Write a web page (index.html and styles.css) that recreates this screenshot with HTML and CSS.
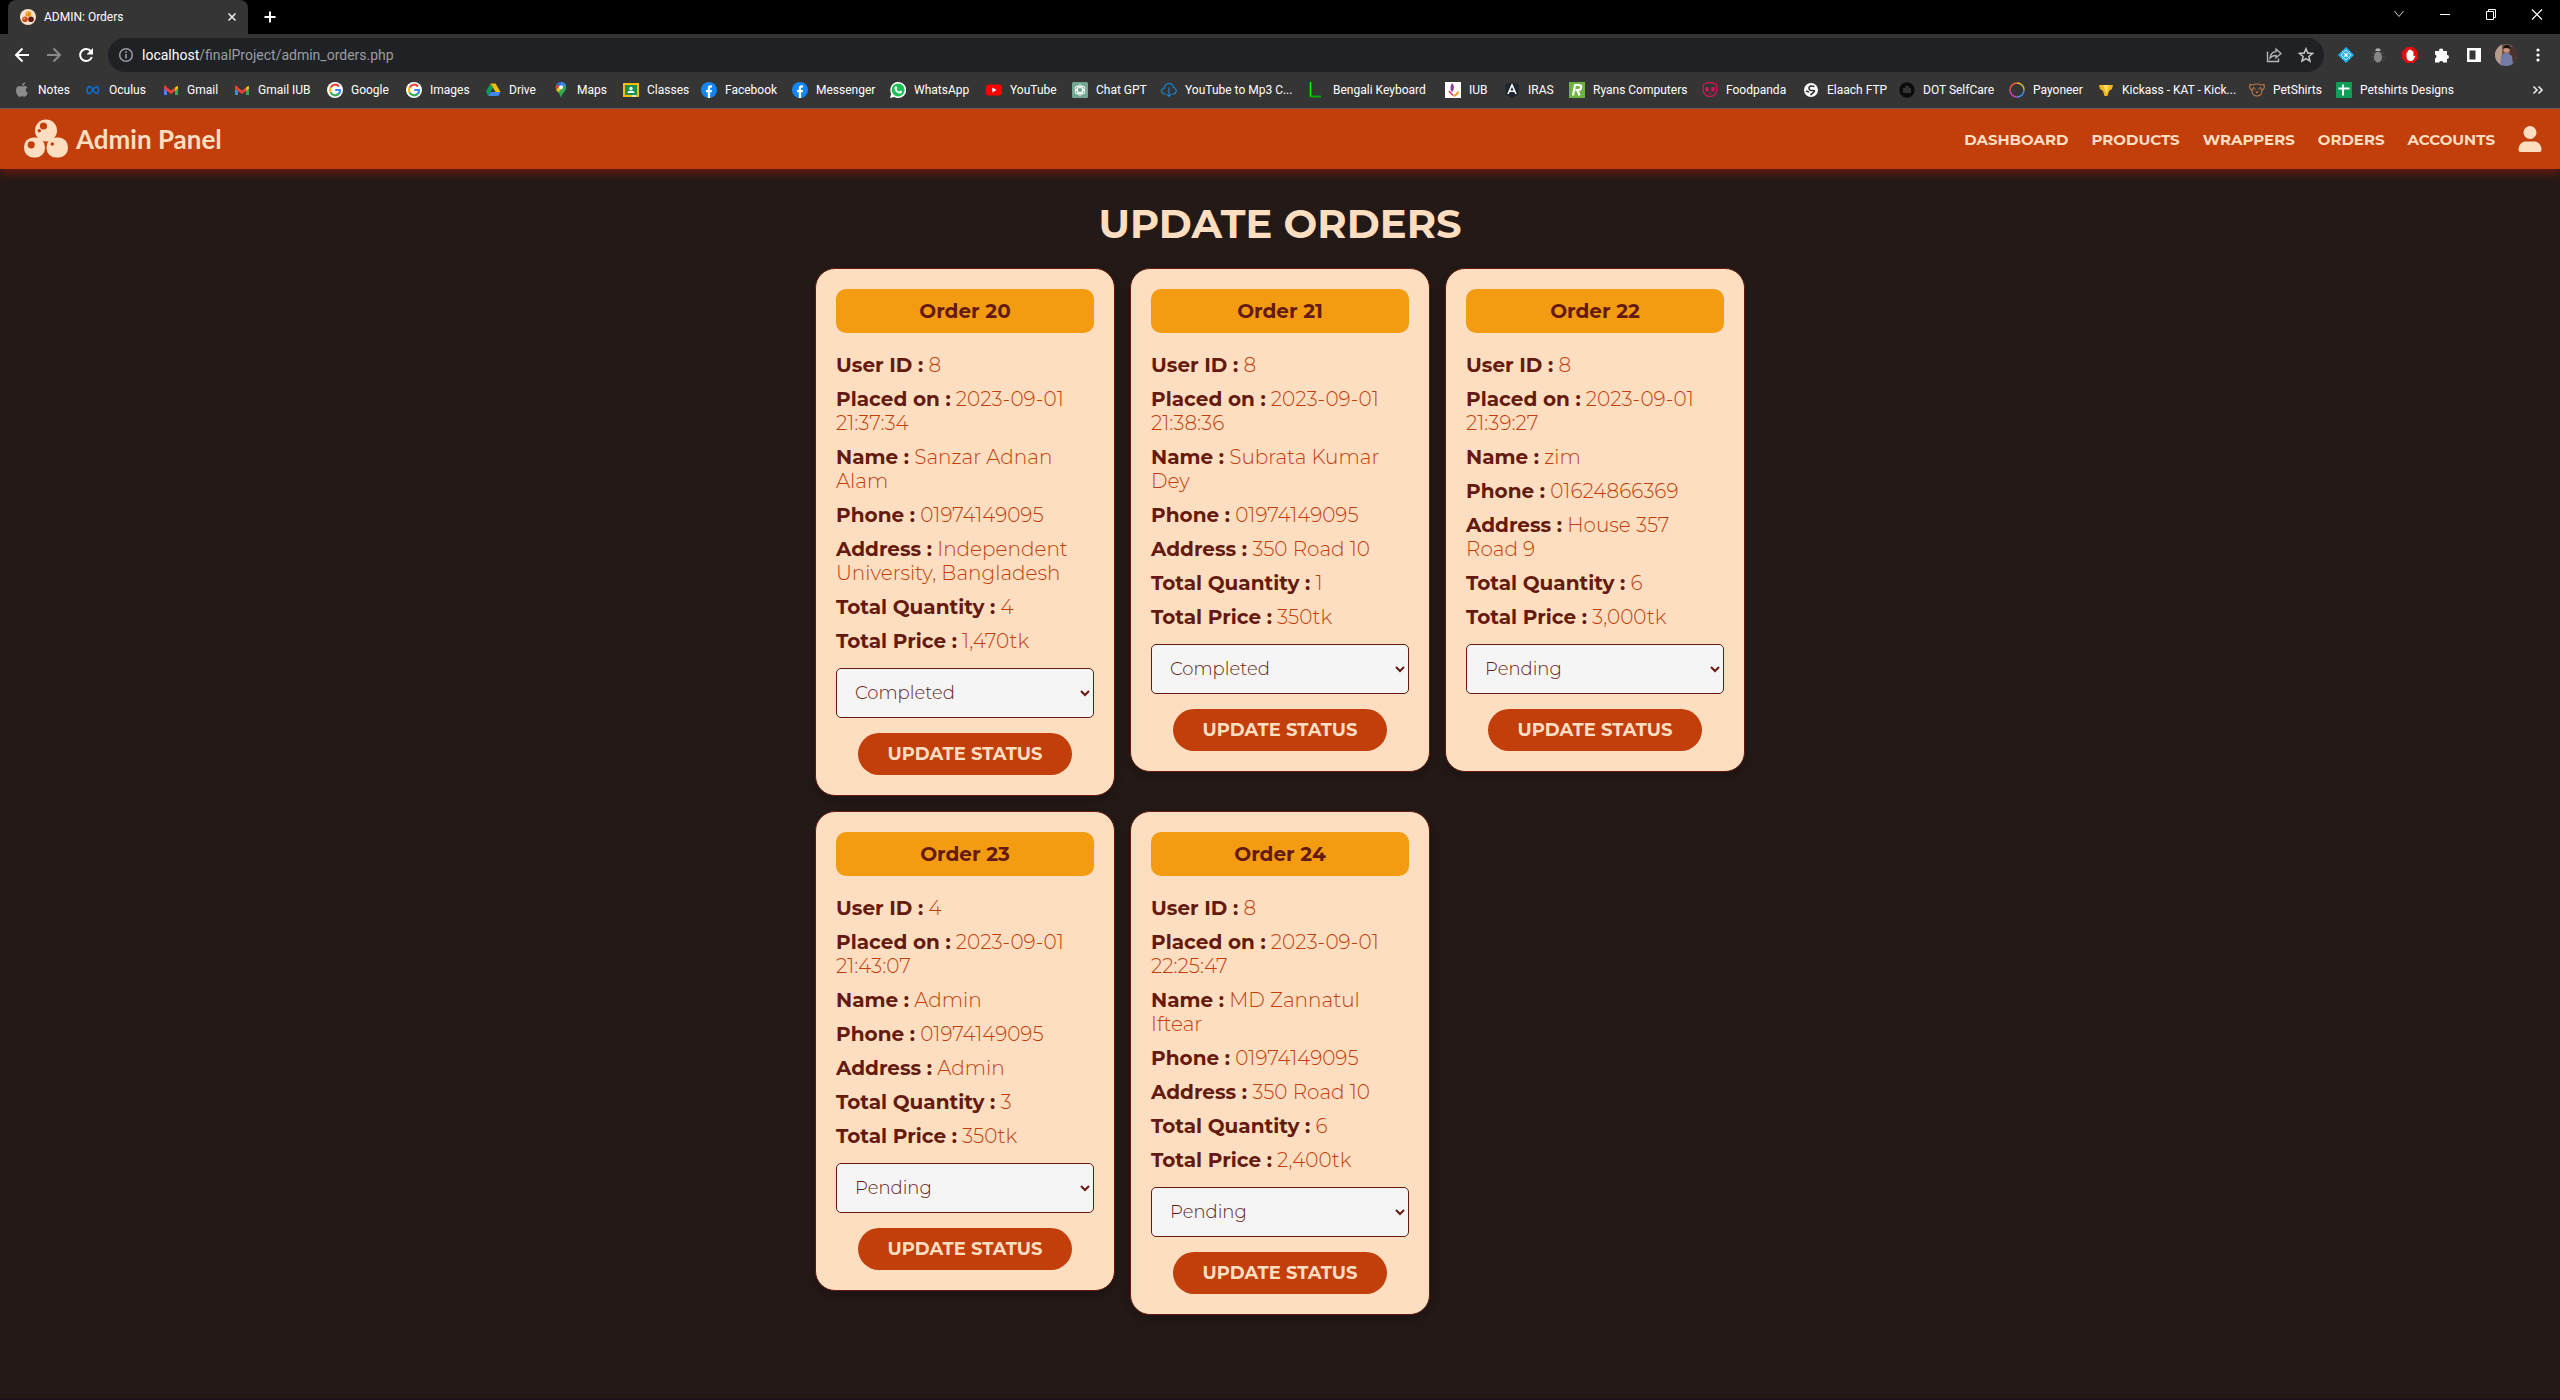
FILE: index.html
```html
<!DOCTYPE html>
<html lang="en">
<head>
<meta charset="utf-8">
<title>ADMIN: Orders</title>
<link rel="stylesheet" href="styles.css">
</head>
<body>
<svg class="defs" aria-hidden="true">
  <symbol id="i-gmail" viewBox="0 0 16 16"><path d="M1 4v9h3V7z" fill="#4285f4"/><path d="M12 7v6h3V4z" fill="#34a853"/><path d="M1 3.500l3 2.300v3.200L1 6.500z" fill="#c5221f"/><path d="M4 5.500l4 3 4-3v3.500l-4 3-4-3z" fill="#ea4335"/><path d="M12 5.500l1.500-1.300q1.500-.8 1.500 1V6.500L12 9z" fill="#fbbc04"/><path d="M1 5q0-2 1.700-1.300L4 5v4L1 6.500z" fill="#ea4335"/></symbol>
  <symbol id="i-google" viewBox="0 0 16 16"><circle cx="8" cy="8" r="8" fill="#fff"/><g fill="none" stroke-width="2.200"><path d="M12 4.500A5 5 0 0 0 3.600 5.600" stroke="#ea4335"/><path d="M3.600 5.600a5 5 0 0 0 0 4.800" stroke="#fbbc04"/><path d="M3.600 10.400a5 5 0 0 0 8 1.500" stroke="#34a853"/><path d="M11.600 11.900A5 5 0 0 0 13 8H8.200" stroke="#4285f4"/></g></symbol>
  <symbol id="i-facebook" viewBox="0 0 16 16"><circle cx="8" cy="8" r="8" fill="#1286f3"/><path d="M6.800 16V10.300H5V8h1.800V6.300c0-2 1.100-3 2.800-3l1.500.1v2h-1c-.8 0-1 .5-1 1.100V8h2l-.4 2.300H9.100V16z" fill="#fff"/></symbol>
</svg>

<div class="browser">
  <div class="tabstrip">
    <div class="tab">
      <svg class="ico" viewBox="0 0 16 16"><circle cx="8" cy="8" r="8" fill="#fbe3cb"/><circle cx="8.300" cy="5" r="2.800" fill="#f0900f"/><circle cx="5" cy="10.200" r="2.800" fill="#d44a12"/><circle cx="11" cy="10.200" r="2.800" fill="#641a0e"/><circle cx="7.300" cy="4" r=".8" fill="#fbe3cb"/><circle cx="4.200" cy="9.400" r=".7" fill="#fbe3cb"/></svg>
      <span class="tab-title">ADMIN: Orders</span>
      <button class="plain" aria-label="Close tab"><svg class="ico" viewBox="0 0 16 16"><path d="M4.500 4.500l7 7M11.500 4.500l-7 7" stroke="#e8e8e8" stroke-width="1.600"/></svg></button>
    </div>
    <button class="plain newtab" aria-label="New tab"><svg class="ico" viewBox="0 0 16 16"><path d="M8 2.500v11M2.500 8h11" stroke="#fff" stroke-width="2"/></svg></button>
    <div class="window-buttons">
      <button class="plain" aria-label="Search tabs"><svg class="ico" viewBox="0 0 16 16"><path d="M3.500 5L8 10.500 12.500 5" fill="none" stroke="#ccc"/></svg></button>
      <button class="plain" aria-label="Minimize"><svg class="ico" viewBox="0 0 16 16"><path d="M3 8.500h10" stroke="#fff"/></svg></button>
      <button class="plain" aria-label="Restore"><svg class="ico" viewBox="0 0 16 16"><path d="M3.500 5.500h7v8h-7zM5.500 5.500v-2h7v8h-2" fill="none" stroke="#fff"/></svg></button>
      <button class="plain" aria-label="Close"><svg class="ico" viewBox="0 0 16 16"><path d="M3 3.500l10 10M13 3.500l-10 10" stroke="#fff" stroke-width="1.200"/></svg></button>
    </div>
  </div>

  <div class="toolbar">
    <div class="tools">
      <button class="plain" aria-label="Back"><svg class="ico" viewBox="0 0 16 16"><path d="M15 8H2M8.500 1.500L2 8l6.500 6.500" fill="none" stroke="#fff" stroke-width="2"/></svg></button>
      <button class="plain" aria-label="Forward"><svg class="ico" viewBox="0 0 16 16"><path d="M1 8h13M7.500 1.500L14 8l-6.500 6.500" fill="none" stroke="#8a8a8a" stroke-width="2"/></svg></button>
      <button class="plain" aria-label="Reload"><svg class="ico" viewBox="0 0 16 16"><path d="M13 4.500A6 6 0 1 0 13.800 10" fill="none" stroke="#fff" stroke-width="2"/><path d="M15 1v6.500H8.500z" fill="#fff"/></svg></button>
    </div>
    <div class="omnibox">
      <svg class="ico" viewBox="0 0 16 16"><circle cx="8" cy="8" r="6.300" fill="none" stroke="#9a9da1" stroke-width="1.500"/><path d="M8 7v4.500M8 4.300v1.600" stroke="#9a9da1" stroke-width="1.600"/></svg>
      <p class="url"><span class="host">localhost</span>/finalProject/admin_orders.php</p>
      <button class="plain" aria-label="Share"><svg class="ico" viewBox="0 0 16 16"><path d="M1.500 4.500v10h11v-3" fill="none" stroke="#b5b7ba" stroke-width="1.400"/><path d="M10 2l5 4.500-5 4.300V8.500c-3 0-4.500.6-6 2.500.4-3.500 2.500-6 6-6.300z" fill="none" stroke="#b5b7ba" stroke-width="1.300"/></svg></button>
      <button class="plain" aria-label="Bookmark"><svg class="ico" viewBox="0 0 16 16"><path d="M8 1.800l1.800 4.300 4.700.4-3.600 3 1.100 4.600L8 11.700 4 14.100l1.100-4.600-3.600-3 4.700-.4z" fill="none" stroke="#c5c7ca" stroke-width="1.500"/></svg></button>
    </div>
    <div class="tools">
      <svg class="ico" viewBox="0 0 16 16"><path d="M8 0l8 8-8 8-8-8z" fill="#1fb2f7"/><path d="M8 3l5 5-5 5-5-5zM4 4l8 8M12 4l-8 8" fill="none" stroke="#b8ecff"/><path d="M8 6l2 2-2 2-2-2z" fill="#fff"/></svg>
      <svg class="ico" viewBox="0 0 16 16"><path d="M2 5l3 2M14 5l-3 2M1 10h14M2.500 14L5 12M13.500 14L11 12" stroke="#505050"/><ellipse cx="8" cy="10" rx="4" ry="5.500" fill="#858585"/><path d="M5.300 4a2.700 2.700 0 0 1 5.400 0z" fill="#b0b0b0"/></svg>
      <svg class="ico" viewBox="0 0 16 16"><path d="M4.700 0h6.600L16 4.700v6.600L11.300 16H4.700L0 11.300V4.700z" fill="#e30f0f"/><path d="M4.500 5.500h1.300V3.200h1.400V2.500h1.400v.8H10v1h1.400V9.500l1-.8 1 .6-2 3.500Q10.500 14 8.500 14 5 14 4.500 10z" fill="#fff"/></svg>
      <svg class="ico" viewBox="0 0 16 16"><path d="M1 4h4.200a2 2 0 1 1 3.900 0H13v4a2 2 0 1 1 0 4v3.500H9.200a2.100 2.100 0 0 0-4 0H1v-4a2.100 2.100 0 0 0 0-4z" fill="#fff"/></svg>
      <svg class="ico" viewBox="0 0 16 16"><path d="M1 1h14v14H1zM3.500 3.500v9h6v-9z" fill="#fff" fill-rule="evenodd"/></svg>
      <svg class="avatar" viewBox="0 0 22 22"><clipPath id="round"><circle cx="11" cy="11" r="11"/></clipPath><g clip-path="url(#round)"><path d="M0 0h22v22H0z" fill="#74564a"/><path d="M0 0h7v22H0z" fill="#b59c8c"/><path d="M15 3h7v15h-7z" fill="#4b3430"/><path d="M5 22l1-10 4-3h3l4 3 1 10z" fill="#747ba8"/><circle cx="11.500" cy="5.800" r="3" fill="#c99377"/><path d="M8 5q0-4 4-4t3 4q-4-2-7 0z" fill="#1b1414"/></g></svg>
      <button class="plain" aria-label="Menu"><svg class="ico" viewBox="0 0 16 16"><circle cx="8" cy="3" r="1.600" fill="#fff"/><circle cx="8" cy="8" r="1.600" fill="#fff"/><circle cx="8" cy="13" r="1.600" fill="#fff"/></svg></button>
    </div>
  </div>

  <nav class="bookmarks" aria-label="Bookmarks">
    <a href="#"><svg class="ico" viewBox="0 0 16 16"><path d="M8.300 4.500c1-.6 3.800-1 5 .9-2.200 1.500-1.800 4.300.5 5.200-.8 2.300-2 4.200-3.300 4.200-.9 0-1.300-.5-2.400-.5s-1.500.5-2.300.5C4 14.800 2 11.500 2 8.500c0-3.500 2.600-5 4.500-4.200zM8 3.800C8 2 9.200.6 11 .2 11.200 2 9.800 3.700 8 3.800z" fill="#8c8c8c"/></svg>Notes</a>
    <a href="#"><svg class="ico" viewBox="0 0 16 16"><path d="M4 11.500c-3 0-2.200-7 .8-7C7 4.500 9 11.500 11.500 11.500c3 0 2.500-7 0-7C8.800 4.500 7 11.500 4 11.500z" fill="none" stroke="#0b6fd6" stroke-width="1.600"/></svg>Oculus</a>
    <a href="#"><svg class="ico"><use href="#i-gmail"/></svg>Gmail</a>
    <a href="#"><svg class="ico"><use href="#i-gmail"/></svg>Gmail IUB</a>
    <a href="#"><svg class="ico"><use href="#i-google"/></svg>Google</a>
    <a href="#"><svg class="ico"><use href="#i-google"/></svg>Images</a>
    <a href="#"><svg class="ico" viewBox="0 0 16 16"><path d="M5.500 1.500L1 9.500 3.300 14 8 5.800z" fill="#0f9d58"/><path d="M5.500 1.500h5L15.500 10h-5z" fill="#fbbc04"/><path d="M5.700 10h9.800l-2.200 4H3.300z" fill="#4285f4"/></svg>Drive</a>
    <a href="#"><svg class="ico" viewBox="0 0 16 16"><path d="M8 0a5.300 5.300 0 0 0-5.200 6C3.200 9.500 7 11 8 16c1-5 4.800-6.500 5.200-10A5.300 5.300 0 0 0 8 0z" fill="#34a853"/><path d="M8 0a5.300 5.300 0 0 1 4.600 2.700L8 8z" fill="#4285f4"/><path d="M8 0a5.300 5.300 0 0 0-4.300 2.200L8 6z" fill="#1a73e8"/><path d="M3.700 2.200a5.500 5.500 0 0 0-.5 5.300L6.500 4.500z" fill="#ea4335"/><path d="M3.200 7.500q.8 1.600 2 2.700L9 6.500 6.800 4.800z" fill="#fbbc04"/><circle cx="8" cy="5.300" r="2" fill="#fff"/></svg>Maps</a>
    <a href="#"><svg class="ico" viewBox="0 0 16 16"><path d="M0 1h16v14H0z" fill="#fbbc04"/><path d="M2 3h12v10H2z" fill="#1e8e4e"/><circle cx="8" cy="6.500" r="1.700" fill="#fff"/><path d="M4.500 11q0-2.300 3.500-2.300t3.500 2.300z" fill="#fff"/><path d="M9 13h4v2H9z" fill="#ddd"/></svg>Classes</a>
    <a href="#"><svg class="ico"><use href="#i-facebook"/></svg>Facebook</a>
    <a href="#"><svg class="ico"><use href="#i-facebook"/></svg>Messenger</a>
    <a href="#"><svg class="ico" viewBox="0 0 16 16"><path d="M0 16l1.200-4.200A8 8 0 1 1 4.200 14.900z" fill="#fff"/><circle cx="8.100" cy="7.900" r="6.500" fill="#19c351"/><path d="M5.500 4.200l1 .1.800 1.900-.8 1.100q.9 1.700 2.700 2.400l1-1.100 1.900.9q.1 2-2.100 2.200Q5 10.900 4.500 6.500q0-1.500 1-2.300z" fill="#fff"/></svg>WhatsApp</a>
    <a href="#"><svg class="ico" viewBox="0 0 16 16"><rect y="2.500" width="16" height="11" rx="2.500" fill="#f00"/><path d="M6.300 5.500v5l4.200-2.500z" fill="#fff"/></svg>YouTube</a>
    <a href="#"><svg class="ico" viewBox="0 0 16 16"><rect width="16" height="16" rx="1.500" fill="#74a892"/><g fill="none" stroke="#f2faf6"><ellipse cx="8" cy="8" rx="2.600" ry="5.300"/><ellipse cx="8" cy="8" rx="2.600" ry="5.300" transform="rotate(60 8 8)"/><ellipse cx="8" cy="8" rx="2.600" ry="5.300" transform="rotate(120 8 8)"/></g></svg>Chat GPT</a>
    <a href="#"><svg class="ico" viewBox="0 0 16 16"><path d="M5 12H3.500a3 3 0 0 1 0-6C4 .5 11.500 0 12.500 5.500a3.300 3.300 0 0 1 0 6.500H11M8 5.500v9M5.800 12.300L8 14.500l2.200-2.200" fill="none" stroke="#1684c9" stroke-width="1.200"/></svg>YouTube to Mp3 C...</a>
    <a href="#"><svg class="ico" viewBox="0 0 16 16"><path d="M1.500 0v14.500" stroke="#0f0" stroke-width="1.500"/><path d="M.8 14.500H12" stroke="#00a800" stroke-width="2"/></svg>Bengali Keyboard</a>
    <a href="#"><svg class="ico" viewBox="0 0 16 16"><path d="M0 0h16v16H0z" fill="#fff"/><path d="M7 1c3 3 2 7 0 9C5 8 5 4 7 1z" fill="#8d3a9b"/><path d="M4 9l4 4.500" stroke="#d32f5b" stroke-width="1.500"/><path d="M8 14l6-5.500-.5 3.500L9.500 15z" fill="#f59a1b"/></svg>IUB</a>
    <a href="#"><svg class="ico" viewBox="0 0 16 16"><path d="M8 0l7 2.500-1 10L8 16l-6-3.500-1-10z" fill="#1d2430"/><path d="M4 12L8 3l4 9M5.500 9.300h5" fill="none" stroke="#fff" stroke-width="1.600"/></svg>IRAS</a>
    <a href="#"><svg class="ico" viewBox="0 0 16 16"><path d="M0 0h16v16H0z" fill="#6cb33f"/><path d="M4 13.500L6 3h3.500q3.200 0 2.600 2.800-.5 2.400-3.100 2.400H6.500M8.500 8.200l2 5.300" fill="none" stroke="#fff" stroke-width="2.200"/></svg>Ryans Computers</a>
    <a href="#"><svg class="ico" viewBox="0 0 16 16"><path d="M3 1.500a2 2 0 0 0-1.500 3.200C0 9.500 3 14.500 8 14.500s8-5 6.500-9.800A2 2 0 0 0 13 1.500Q8-.2 3 1.500z" fill="none" stroke="#d2145a" stroke-width="1.200"/><ellipse cx="5" cy="7.300" rx="1.800" ry="2.400" fill="#d2145a"/><ellipse cx="11" cy="7.300" rx="1.800" ry="2.400" fill="#d2145a"/><path d="M6.500 11h3L8 12.500z" fill="#d2145a"/></svg>Foodpanda</a>
    <a href="#"><svg class="ico" viewBox="0 0 16 16"><circle cx="8" cy="8" r="7" fill="#fff"/><path d="M11.500 4.500Q6 3 6 6t4 2.500-2.500 4.500M3 9l3 1" fill="none" stroke="#333" stroke-width="1.600"/></svg>Elaach FTP</a>
    <a href="#"><svg class="ico" viewBox="0 0 16 16"><circle cx="8" cy="8" r="7.700" fill="#0b0b0b"/><path d="M4 6h8v5H4zM6 4h4v2H6z" fill="#333"/></svg>DOT SelfCare</a>
    <a href="#"><svg class="ico" viewBox="0 0 16 16"><g fill="none" stroke-width="1.500"><path d="M8 1a7 7 0 0 0-7 7" stroke="#ff5a36"/><path d="M8 1a7 7 0 0 1 7 7" stroke="#d9c02f"/><path d="M15 8a7 7 0 0 1-7 7" stroke="#3f8bf0"/><path d="M8 15a7 7 0 0 1-7-7" stroke="#d63fb4"/></g></svg>Payoneer</a>
    <a href="#"><svg class="ico" viewBox="0 0 16 16"><path d="M1 3h14l-1 4-3 2-1.500 5h-3L5 9 2 7z" fill="#f6b51e"/><path d="M5 3h6L8.500 12z" fill="#ffdc60"/></svg>Kickass - KAT - Kick...</a>
    <a href="#"><svg class="ico" viewBox="0 0 16 16"><path d="M4 3q4-2 8 0l3-.5.5 3-2.500 3q0 5.500-5 5.500T3 8.500L.5 5.500l.5-3zM3 8.500L5 5M13 8.500L11 5" fill="none" stroke="#b5734a" stroke-width="1.200"/><circle cx="6" cy="7" r=".8" fill="#b5734a"/><circle cx="10" cy="7" r=".8" fill="#b5734a"/><path d="M6.500 9.500h3L8 11.500z" fill="#d9894f"/></svg>PetShirts</a>
    <a href="#"><svg class="ico" viewBox="0 0 16 16"><rect width="16" height="16" rx="1" fill="#0f9d58"/><path d="M7 2.500v11M2.500 6.500h11" stroke="#fff" stroke-width="2"/></svg>Petshirts Designs</a>
    <button class="plain more" aria-label="More bookmarks"><svg class="ico" viewBox="0 0 16 16"><path d="M3.500 4.500L7 8l-3.500 3.500M8.500 4.500L12 8l-3.500 3.500" fill="none" stroke="#e8e8e8" stroke-width="1.600"/></svg></button>
  </nav>
</div>

<header class="header">
  <a class="logo" href="#">
    <svg class="logo-mark" viewBox="0 0 44 40"><g fill="#fedec1"><circle cx="22" cy="11.500" r="11"/><rect y="18.500" width="21" height="20" rx="9.500"/><rect x="22.500" y="18.500" width="21.500" height="20" rx="9.500"/></g><g fill="#c23f0c"><circle cx="19.500" cy="7" r="3.600"/><circle cx="15.300" cy="11.800" r="1.700"/><circle cx="7.200" cy="25.800" r="3.600"/><circle cx="28.300" cy="25" r="1.800"/></g></svg>
    Admin Panel
  </a>
  <nav class="menu" aria-label="Main">
    <a href="#">DASHBOARD</a>
    <a href="#">PRODUCTS</a>
    <a href="#">WRAPPERS</a>
    <a href="#">ORDERS</a>
    <a href="#">ACCOUNTS</a>
    <a href="#" aria-label="Profile"><svg class="user" viewBox="0 0 24 26"><circle cx="12" cy="6.500" r="6.500" fill="#fedec1"/><path d="M.5 24c0-6 4-8.500 7.500-8.500h8c3.500 0 7.500 2.500 7.500 8.500q0 2-2 2h-19q-2 0-2-2z" fill="#fedec1"/></svg></a>
  </nav>
</header>

<main class="orders">
  <h1 class="title">UPDATE ORDERS</h1>
  <div class="grid">
    <form class="card">
      <h2 class="badge">Order 20</h2>
      <p><b>User ID :</b> 8</p>
      <p><b>Placed on :</b> 2023-09-01 21:37:34</p>
      <p><b>Name :</b> Sanzar Adnan Alam</p>
      <p><b>Phone :</b> 01974149095</p>
      <p><b>Address :</b> Independent University, Bangladesh</p>
      <p><b>Total Quantity :</b> 4</p>
      <p><b>Total Price :</b> 1,470tk</p>
      <select class="status" aria-label="Status of order 20"><option>Completed</option><option>Pending</option></select>
      <button class="update" type="button">UPDATE STATUS</button>
    </form>
    <form class="card">
      <h2 class="badge">Order 21</h2>
      <p><b>User ID :</b> 8</p>
      <p><b>Placed on :</b> 2023-09-01 21:38:36</p>
      <p><b>Name :</b> Subrata Kumar Dey</p>
      <p><b>Phone :</b> 01974149095</p>
      <p><b>Address :</b> 350 Road 10</p>
      <p><b>Total Quantity :</b> 1</p>
      <p><b>Total Price :</b> 350tk</p>
      <select class="status" aria-label="Status of order 21"><option>Completed</option><option>Pending</option></select>
      <button class="update" type="button">UPDATE STATUS</button>
    </form>
    <form class="card">
      <h2 class="badge">Order 22</h2>
      <p><b>User ID :</b> 8</p>
      <p><b>Placed on :</b> 2023-09-01 21:39:27</p>
      <p><b>Name :</b> zim</p>
      <p><b>Phone :</b> 01624866369</p>
      <p><b>Address :</b> House 357 Road 9</p>
      <p><b>Total Quantity :</b> 6</p>
      <p><b>Total Price :</b> 3,000tk</p>
      <select class="status" aria-label="Status of order 22"><option>Pending</option><option>Completed</option></select>
      <button class="update" type="button">UPDATE STATUS</button>
    </form>
    <form class="card">
      <h2 class="badge">Order 23</h2>
      <p><b>User ID :</b> 4</p>
      <p><b>Placed on :</b> 2023-09-01 21:43:07</p>
      <p><b>Name :</b> Admin</p>
      <p><b>Phone :</b> 01974149095</p>
      <p><b>Address :</b> Admin</p>
      <p><b>Total Quantity :</b> 3</p>
      <p><b>Total Price :</b> 350tk</p>
      <select class="status" aria-label="Status of order 23"><option>Pending</option><option>Completed</option></select>
      <button class="update" type="button">UPDATE STATUS</button>
    </form>
    <form class="card">
      <h2 class="badge">Order 24</h2>
      <p><b>User ID :</b> 8</p>
      <p><b>Placed on :</b> 2023-09-01 22:25:47</p>
      <p><b>Name :</b> MD Zannatul Iftear</p>
      <p><b>Phone :</b> 01974149095</p>
      <p><b>Address :</b> 350 Road 10</p>
      <p><b>Total Quantity :</b> 6</p>
      <p><b>Total Price :</b> 2,400tk</p>
      <select class="status" aria-label="Status of order 24"><option>Pending</option><option>Completed</option></select>
      <button class="update" type="button">UPDATE STATUS</button>
    </form>
  </div>
</main>
</body>
</html>
```
FILE: styles.css
```css
* { box-sizing: border-box; margin: 0; padding: 0; }
body {
  min-height: 100vh;
  display: flex;
  flex-direction: column;
  background: #231917;
  color: #c23f0c;
  font-family: Montserrat, "Open Sans", sans-serif;
}
a { color: inherit; text-decoration: none; }
.defs { display: none; }
.ico { display: block; flex: none; width: 16px; height: 16px; }
.plain { display: block; background: none; border: 0; }

/* Browser chrome */
.browser { background: #353535; color: #fff; font: 12px/16px Roboto, "Open Sans", sans-serif; border-bottom: 1px solid #656565; }
.tabstrip { display: flex; align-items: center; height: 34px; padding-left: 8px; background: #000; }
.tab { display: flex; align-items: center; gap: 8px; width: 240px; height: 34px; padding: 0 8px 0 12px; background: #353535; border-radius: 8px 8px 0 0; }
.tab-title { flex: 1; }
.newtab { margin-left: 14px; }
.window-buttons { display: flex; gap: 30px; margin: -6px 15px 0 auto; }
.toolbar { display: flex; align-items: center; gap: 14px; padding: 4px 14px 0; }
.tools { display: flex; align-items: center; gap: 16px; }
.avatar { width: 22px; height: 22px; margin: 0 -3px; }
.omnibox { flex: 1; display: flex; align-items: center; gap: 16px; height: 34px; padding: 0 10px; border-radius: 17px; background: #202124; }
.url { flex: 1; margin-left: -8px; font-size: 14px; color: #9a9da1; }
.host { color: #fff; }
.bookmarks {
  display: grid;
  grid-template-columns: 71px 78px 71px 93px 79px 79px 68px 70px 78px 91px 98px 96px 86px 89px 148px 136px 59px 65px 133px 101px 96px 110px 89px 151px 87px 1fr auto;
  align-items: center;
  height: 36px;
  padding: 0 14px;
  white-space: nowrap;
}
.bookmarks a { display: flex; align-items: center; gap: 8px; }

/* Site header */
.header {
  display: flex;
  align-items: center;
  justify-content: space-between;
  height: 60px;
  padding: 0 18px 0 24px;
  background: #c23f0c;
  color: #fedec1;
  box-shadow: 0 5px 8px #641a0e;
}
.logo { display: flex; align-items: center; gap: 8px; font: 700 26px/32px Lato, "Open Sans", sans-serif; }
.logo-mark { width: 44px; height: 40px; }
.menu { display: flex; align-items: center; gap: 23px; font-size: 15px; font-weight: 700; }
.user { display: block; width: 24px; height: 26px; }

/* Orders */
.orders { flex: 1; padding: 30px 20px; border-bottom: 2px solid #1d1019; }
.title { margin-bottom: 20px; color: #fedec1; font-size: 40px; line-height: 49px; font-weight: 700; text-align: center; }
.grid { display: grid; grid-template-columns: repeat(auto-fill, 300px); justify-content: center; align-items: start; gap: 15px; max-width: 930px; margin: 0 auto; }
.card {
  display: flex;
  flex-direction: column;
  gap: 10px;
  padding: 20px;
  background: #fedec1;
  border: 1px solid #641a0e;
  border-radius: 20px;
  box-shadow: 0 5px 10px rgba(0, 0, 0, .2);
  font-size: 20px;
  line-height: 24px;
  font-weight: 300;
}
.card b { font-weight: 700; color: #641a0e; }
.badge { margin-bottom: 10px; padding: 10px; background: #f39c12; border-radius: 10px; color: #641a0e; font-size: 20px; font-weight: 700; text-align: center; }
.status { width: 100%; height: 50px; margin-top: 5px; padding: 0 14px; background: #f5f5f5; border: 1px solid #641a0e; border-radius: 5px; color: #641a0e; font: 300 18px/22px Montserrat, "Open Sans", sans-serif; }
.update { align-self: center; margin-top: 5px; padding: 10px 30px; background: #c23f0c; border: 0; border-radius: 21px; color: #fedec1; font: 700 18px/22px Montserrat, "Open Sans", sans-serif; }
```
